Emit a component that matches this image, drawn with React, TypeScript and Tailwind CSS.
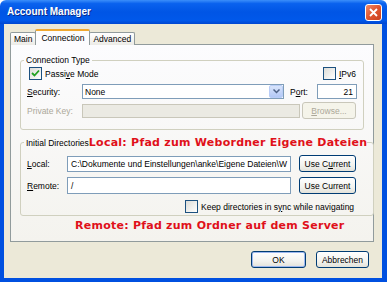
import React from 'react';

function CheckBox({ checked }: { checked?: boolean }) {
  return (
    <span className="w-[13px] h-[13px] shrink-0 border border-[#1c5180] bg-[linear-gradient(135deg,#dcdcd7_0%,#ffffff_100%)] flex items-center justify-center">
      {checked && (
        <svg width="9" height="9" viewBox="0 0 9 9">
          <path d="M1 4 L3.5 6.5 L8 1.5" stroke="#21a121" strokeWidth="1.8" fill="none" />
        </svg>
      )}
    </span>
  );
}

function XpButton({ children, w, disabled, isDefault }: { children: React.ReactNode; w: string; disabled?: boolean; isDefault?: boolean }) {
  return (
    <div
      className={`${w} h-[17px] shrink-0 rounded-[3px] border flex items-center justify-center whitespace-nowrap ${
        disabled
          ? 'border-[#c9c7ba] bg-[#f5f4ea] text-[#aca899]'
          : 'border-[#003c74] bg-[linear-gradient(180deg,#ffffff_0%,#f3f3ef_60%,#e3e2da_100%)] text-black'
      } ${isDefault ? 'shadow-[inset_0_0_0_1px_#9db8ef]' : ''}`}
    >
      {children}
    </div>
  );
}

export default function App() {
  return (
    <div className="w-[387px] h-[282px] flex flex-col overflow-hidden font-['Liberation_Sans',Arial,sans-serif] text-[8.5px] leading-[10px] text-black">
      {/* title bar */}
      <div className="h-[24px] shrink-0 flex items-center justify-between pl-[7px] pr-[5px] rounded-t-[6px] bg-[linear-gradient(180deg,#3b8ffa_0%,#0a62ee_15%,#0055e5_50%,#0058ea_85%,#0046d0_100%)]">
        <span className="text-white font-bold text-[10px] [text-shadow:1px_1px_#0a2a8a]">Account Manager</span>
        <div className="w-[17px] h-[17px] rounded-[3px] border border-white bg-[linear-gradient(135deg,#f08a6a_0%,#e0552e_50%,#c8401f_100%)] flex items-center justify-center">
          <svg width="9" height="9" viewBox="0 0 9 9">
            <path d="M1 1 L8 8 M8 1 L1 8" stroke="white" strokeWidth="1.8" />
          </svg>
        </div>
      </div>

      {/* frame */}
      <div className="flex-1 flex border-l-[4px] border-r-[5px] border-b-[4px] border-[#0050e0]">
        <div className="w-[378px] min-w-0 bg-[#ece9d8] pt-[6px] pl-[6px] flex flex-col">
          {/* tabs */}
          <div className="flex items-end h-[15px] relative z-10 -mb-px">
            <div className="h-[13px] px-[3px] border border-b-0 border-[#919b9c] rounded-t-[2px] bg-[linear-gradient(180deg,#ffffff,#ecebe6)] flex items-center">Main</div>
            <div className="h-[16px] px-[5px] -mx-px border-x border-t-2 border-x-[#919b9c] border-t-[#f0a830] rounded-t-[2px] bg-[#fcfcfe] flex items-center relative z-10">Connection</div>
            <div className="h-[13px] px-[3px] border border-b-0 border-[#919b9c] rounded-t-[2px] bg-[linear-gradient(180deg,#ffffff,#ecebe6)] flex items-center">Advanced</div>
          </div>

          {/* panel */}
          <div className="w-[364px] h-[198px] border border-[#919b9c] bg-[linear-gradient(180deg,#fcfcfe_0%,#f4f3ee_100%)] pl-[9px] pt-[10px]">
            <fieldset className="w-[342px] border border-[#d0d0bf] rounded-[3px] px-[6px] pb-[5px] h-[75px]">
              <legend className="ml-[-3px] px-[2px] leading-[10px]">Connection Type</legend>
              <div className="flex items-center justify-between mt-[2px] h-[13px] pl-[2px] pr-[1px]">
                <label className="flex items-center gap-[3px]">
                  <CheckBox checked />
                  <span>Passi<u>v</u>e Mode</span>
                </label>
                <label className="flex items-center gap-[3px]">
                  <CheckBox />
                  <span><u>I</u>Pv6</span>
                </label>
              </div>
              <div className="flex items-center mt-[4px] h-[15px]">
                <span className="w-[55px] shrink-0"><u>S</u>ecurity:</span>
                <div className="w-[202px] shrink-0 h-[15px] border border-[#7f9db9] bg-white flex items-center justify-between pl-[2px]">
                  <span>None</span>
                  <div className="w-[14px] h-[13px] rounded-[2px] bg-[linear-gradient(180deg,#d8e4fb,#b3c8f6)] border border-[#b9cdf7] flex items-center justify-center">
                    <svg width="7" height="5" viewBox="0 0 7 5">
                      <path d="M0.5 0.5 L3.5 3.5 L6.5 0.5" stroke="#4d6185" strokeWidth="1.5" fill="none" />
                    </svg>
                  </div>
                </div>
                <span className="ml-[6px] w-[27px] shrink-0">P<u>o</u>rt:</span>
                <div className="w-[40px] shrink-0 h-[15px] border border-[#7f9db9] bg-white flex items-center justify-end pr-[3px]">21</div>
              </div>
              <div className="flex items-center mt-[3px] h-[17px]">
                <span className="w-[55px] shrink-0 text-[#aca899]">Private Key:</span>
                <div className="w-[218px] shrink-0 h-[14px] border border-[#c9c7ba] bg-[#ebeae3]" />
                <div className="ml-[2px]">
                  <XpButton w="w-[54px]" disabled><u>B</u>rowse...</XpButton>
                </div>
              </div>
            </fieldset>

            <fieldset className="w-[342px] border border-[#d0d0bf] rounded-[3px] px-[6px] mt-[6px] h-[80px]">
              <legend className="ml-[-3px] pl-[2px] flex items-center whitespace-nowrap">
                <span>Initial Directories</span>
                <span className="font-['DejaVu_Sans',Verdana,sans-serif] font-bold text-[11px] leading-[13px] text-[#e0101a] tracking-[0.25px]">Local: Pfad zum Webordner Eigene Dateien</span>
              </legend>
              <div className="flex items-center mt-[6px] h-[17px]">
                <span className="w-[40px] shrink-0"><u>L</u>ocal:</span>
                <div className="w-[224px] shrink-0 h-[16px] border border-[#7f9db9] bg-white flex items-center pl-[3px] overflow-hidden whitespace-nowrap">
                  C:\Dokumente und Einstellungen\anke\Eigene Dateien\W
                </div>
                <div className="ml-[8px]">
                  <XpButton w="w-[57px]">Use C<u>u</u>rrent</XpButton>
                </div>
              </div>
              <div className="flex items-center mt-[5px] h-[17px]">
                <span className="w-[40px] shrink-0"><u>R</u>emote:</span>
                <div className="w-[224px] shrink-0 h-[17px] border border-[#7f9db9] bg-white flex items-center pl-[3px]">/</div>
                <div className="ml-[8px]">
                  <XpButton w="w-[57px]">Use Current</XpButton>
                </div>
              </div>
              <label className="flex items-center gap-[3px] mt-[6px] ml-[158px] h-[13px]">
                <CheckBox />
                <span>Keep directories in s<u>y</u>nc while navigating</span>
              </label>
            </fieldset>

            <div className="mt-[3px] pl-[55px] font-['DejaVu_Sans',Verdana,sans-serif] font-bold text-[11px] leading-[13px] text-[#e0101a] tracking-[0.25px] whitespace-nowrap">
              Remote: Pfad zum Ordner auf dem Server
            </div>
          </div>

          {/* buttons */}
          <div className="flex justify-end gap-[10px] mt-[9px] pr-[13px]">
            <XpButton w="w-[55px]" isDefault>OK</XpButton>
            <XpButton w="w-[53px]">Abbrechen</XpButton>
          </div>
        </div>
      </div>
    </div>
  );
}
